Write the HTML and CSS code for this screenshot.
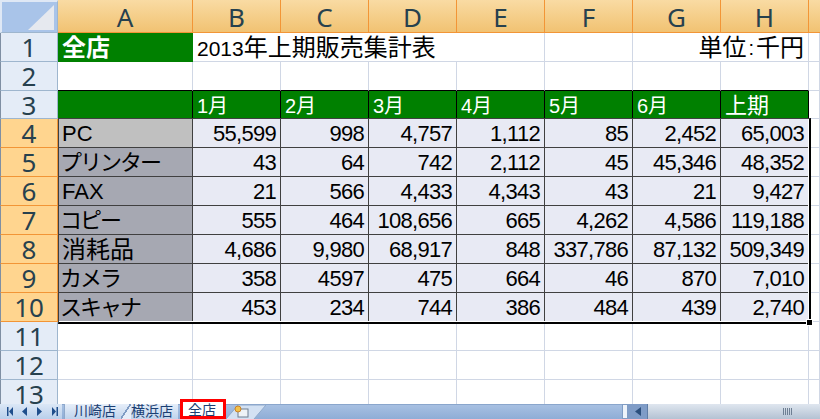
FILE: index.html
```html
<!DOCTYPE html>
<html lang="ja">
<head>
<meta charset="utf-8">
<title>2013年上期販売集計表</title>
<link rel="stylesheet" href="styles.css">
</head>
<body>
<div class="app">
<div class="sheet">
  <div class="corner"><svg width="53" height="29" viewBox="0 0 53 29"><polygon points="26,28 52,3 52,28" fill="#e6e9ef"/></svg></div>
  <div class="ch">A</div><div class="ch">B</div><div class="ch">C</div><div class="ch">D</div><div class="ch">E</div><div class="ch">F</div><div class="ch">G</div><div class="ch">H</div><div class="ch end"></div>

  <div class="rh">1</div><div class="c green bold big">全店</div><div class="c span4 big"><span class="latin">2013</span>年上期販売集計表</div><div class="c"></div><div class="c span2 num big">単位<span class="colon">:</span>千円</div><div class="c"></div>
  <div class="rh">2</div><div class="c toblack"></div><div class="c toblack"></div><div class="c toblack"></div><div class="c toblack"></div><div class="c toblack"></div><div class="c toblack"></div><div class="c toblack"></div><div class="c toblack"></div><div class="c"></div>
  <div class="rh r3">3</div><div class="c green hd"></div><div class="c green hd month">1月</div><div class="c green hd month">2月</div><div class="c green hd month">3月</div><div class="c green hd month">4月</div><div class="c green hd month">5月</div><div class="c green hd month">6月</div><div class="c green hd">上期</div><div class="c r3"></div>

  <div class="rh sel">4</div><div class="c name active">PC</div><div class="c d">55,599</div><div class="c d">998</div><div class="c d">4,757</div><div class="c d">1,112</div><div class="c d">85</div><div class="c d">2,452</div><div class="c d">65,003</div><div class="c"></div>
  <div class="rh sel">5</div><div class="c name kana">プリンター</div><div class="c d">43</div><div class="c d">64</div><div class="c d">742</div><div class="c d">2,112</div><div class="c d">45</div><div class="c d">45,346</div><div class="c d">48,352</div><div class="c"></div>
  <div class="rh sel">6</div><div class="c name">FAX</div><div class="c d">21</div><div class="c d">566</div><div class="c d">4,433</div><div class="c d">4,343</div><div class="c d">43</div><div class="c d">21</div><div class="c d">9,427</div><div class="c"></div>
  <div class="rh sel">7</div><div class="c name kana">コピー</div><div class="c d">555</div><div class="c d">464</div><div class="c d">108,656</div><div class="c d">665</div><div class="c d">4,262</div><div class="c d">4,586</div><div class="c d">119,188</div><div class="c"></div>
  <div class="rh sel">8</div><div class="c name big">消耗品</div><div class="c d">4,686</div><div class="c d">9,980</div><div class="c d">68,917</div><div class="c d">848</div><div class="c d">337,786</div><div class="c d">87,132</div><div class="c d">509,349</div><div class="c"></div>
  <div class="rh sel">9</div><div class="c name kana">カメラ</div><div class="c d">358</div><div class="c d">4597</div><div class="c d">475</div><div class="c d">664</div><div class="c d">46</div><div class="c d">870</div><div class="c d">7,010</div><div class="c"></div>
  <div class="rh sel">10</div><div class="c name kana">スキャナ</div><div class="c d">453</div><div class="c d">234</div><div class="c d">744</div><div class="c d">386</div><div class="c d">484</div><div class="c d">439</div><div class="c d">2,740</div><div class="c"></div>

  <div class="rh">11</div><div class="c"></div><div class="c"></div><div class="c"></div><div class="c"></div><div class="c"></div><div class="c"></div><div class="c"></div><div class="c"></div><div class="c"></div>
  <div class="rh">12</div><div class="c"></div><div class="c"></div><div class="c"></div><div class="c"></div><div class="c"></div><div class="c"></div><div class="c"></div><div class="c"></div><div class="c"></div>
  <div class="rh">13</div><div class="c"></div><div class="c"></div><div class="c"></div><div class="c"></div><div class="c"></div><div class="c"></div><div class="c"></div><div class="c"></div><div class="c"></div>

  <div class="selection"><span class="handle"></span></div>
</div>
<div class="bar">
  <div class="nav">
    <svg width="62" height="15" viewBox="0 0 62 15" fill="#1f4e8c"><rect x="7" y="3" width="1.5" height="9"/><polygon points="13,3 13,12 9,7.5"/><polygon points="27,3 27,12 22,7.5"/><polygon points="37,3 37,12 42,7.5"/><polygon points="52,3 52,12 56,7.5"/><rect x="56.5" y="3" width="1.5" height="9"/></svg>
  </div>
  <div class="tab">川崎店</div>
  <div class="tab second">横浜店</div>
  <div class="tab active-tab">全店</div>
  <div class="newtab">
    <svg width="40" height="15" viewBox="0 0 40 15"><polygon points="0,15 12,1 40,1 28,15" fill="#d3e1f3"/><polyline points="0,15 12,1 40,1 28,15" fill="none" stroke="#8fa9cc"/><rect x="12" y="5" width="10" height="8" fill="#eef2f7" stroke="#6f7f92"/><circle cx="12" cy="5" r="3" fill="#f2c14a" stroke="#c9822a"/></svg>
  </div>
  <div class="barfill"></div>
  <div class="splitter"></div>
  <div class="scrollarrow"><svg width="20" height="15" viewBox="0 0 20 15"><polygon points="13,3 13,12 7,7.5" fill="#2c4f7c"/></svg></div>
  <div class="track"><span class="grip"></span></div>
</div>
</div>
</body>
</html>
```
FILE: styles.css
```css
* { box-sizing: border-box; }
html, body { margin: 0; padding: 0; }
body { font-family: "Liberation Sans", "Noto Sans CJK JP", sans-serif; background: #fff; }
.app { width: 820px; height: 419px; display: flex; flex-direction: column; overflow: hidden; }
.sheet {
  flex: 1; min-height: 0; overflow: hidden; display: grid; position: relative;
  grid-template-columns: 58px 135px repeat(7, 88px) 11px;
  grid-template-rows: 33px 29px 29px 28px repeat(7, 29px) 29px 29px 29px;
  font-size: 22px; color: #000;
}
.corner { background: #a9c4e9; border-right: 1px solid #9eb6ce; border-left: 2px solid #dfe8f5; border-top: 2px solid #dfe8f5; border-bottom: 1px solid #9eb6ce; overflow: hidden; }
.ch {
  display: flex; align-items: center; justify-content: center;
  background: linear-gradient(#f9dba3, #f1c272);
  border-right: 1px solid #f29536; border-bottom: 1px solid #f29536;
  font: 26px/1 "Noto Sans", sans-serif; color: #27414e; padding-top: 1px;
}
.ch.end { border-right: 0; }
.rh {
  display: flex; align-items: center; justify-content: center;
  background: #e4ecf7; border-right: 1px solid #9eb6ce; border-bottom: 1px solid #9eb6ce;
  border-left: 1px solid #7f8fa3;
  font: 26px/1 "Noto Sans", sans-serif; color: #27414e;
}
.rh.sel { background: #ffd58f; border-bottom-color: #f29536; border-right-color: #f29536; }
.c {
  display: flex; align-items: center; padding: 2px 4px 0;
  border-right: 1px solid #d0d7e5; border-bottom: 1px solid #d0d7e5;
  white-space: nowrap; min-width: 0; overflow: hidden; line-height: 1;
}
.big { font-size: 24px; }
.latin { font-size: 21px; }
.colon { margin: 0 2px; font-size: 20px; }
.kana { font-size: 22px; letter-spacing: -2px; padding-left: 2px; }
.green { background: #008000; color: #fff; border-right-color: #008000; border-bottom-color: #008000; }
.bold { font-weight: 700; }
.span4 { grid-column: span 4; }
.span2 { grid-column: span 2; }
.num { justify-content: flex-end; }
.toblack { border-bottom-color: #000; }
.hd { border-right-color: #000; border-bottom-color: #e9a3e6; padding-top: 3px; font-size: 22px; }
.month { font-size: 20px; }
.name { background: #a6a8b2; border-right-color: #404040; border-bottom-color: #404040; }
.name.active { background: #c0c0c0; }
.d { background: #e8eaf4; justify-content: flex-end; border-right-color: #404040; border-bottom-color: #404040; letter-spacing: -0.7px; }
.selection {
  grid-column: 2 / 10; grid-row: 5 / 12; position: absolute; z-index: 2;
  inset: -1px -2px -2px 0;
  border-top: 1px solid #404040; border-left: 1px solid #404040;
  border-right: 2px solid #000; border-bottom: 2px solid #000;
  box-shadow: inset -1px -1px 0 #fff;
}
.handle { position: absolute; right: -3px; bottom: -3px; width: 5px; height: 5px; background: #000; outline: 1px solid #fff; }
.bar {
  flex: none; height: 15px; display: flex; align-items: flex-end;
  background: linear-gradient(#a7c0e2, #8fadd6); border-top: 1px solid #8aa6cc;
  font-size: 14px; color: #1b3f73;
}
.nav { flex: none; width: 62px; height: 15px; background: linear-gradient(#dbe7f6, #b9cfeb); }
.tab {
  flex: none; width: 57px; height: 15px; margin-left: 2px; padding-left: 9px;
  background: linear-gradient(#e6eef9, #bfd3ec); border-left: 1px solid #8fa9cc;
  line-height: 14px; overflow: hidden; white-space: nowrap;
}
.tab.second {
  margin-left: 0; padding-left: 10px; border-left: 0;
  background:
    linear-gradient(to bottom right, transparent calc(50% - 1px), #7f9cc4 calc(50% - 1px), #7f9cc4 calc(50% + 0.5px), #e6eef9 calc(50% + 0.5px)) left top / 10px 15px no-repeat,
    linear-gradient(#e6eef9, #bfd3ec) right top / 47px 15px no-repeat,
    linear-gradient(#e6eef9, #bfd3ec) left top / 10px 15px no-repeat;
}
.active-tab {
  flex: none; width: 46px; height: 20px; margin: -5px 0 0 2px; position: relative; z-index: 3;
  background: #fff; border: 3px solid #f00; padding-left: 5px;
  line-height: 16px; font-size: 14px; overflow: hidden; white-space: nowrap;
}
.newtab { flex: none; width: 40px; height: 15px; }
.newtab svg, .nav svg, .scrollarrow svg { display: block; }
.barfill { flex: 1; height: 15px; }
.splitter { flex: none; width: 6px; height: 15px; background: #eef3fa; border: 1px solid #7f9cc4; }
.scrollarrow { flex: none; width: 19px; height: 15px; background: #7f9cc7; }
.track {
  flex: none; width: 173px; height: 15px; display: flex; justify-content: flex-end; align-items: center; padding-right: 27px;
  background: linear-gradient(#dfe6ef, #b4c2d3);
  border-left: 1px solid #5f7da6;
}
.grip { width: 10px; height: 7px; background: repeating-linear-gradient(90deg, #6e7f93 0 1px, transparent 1px 2px); }
```
